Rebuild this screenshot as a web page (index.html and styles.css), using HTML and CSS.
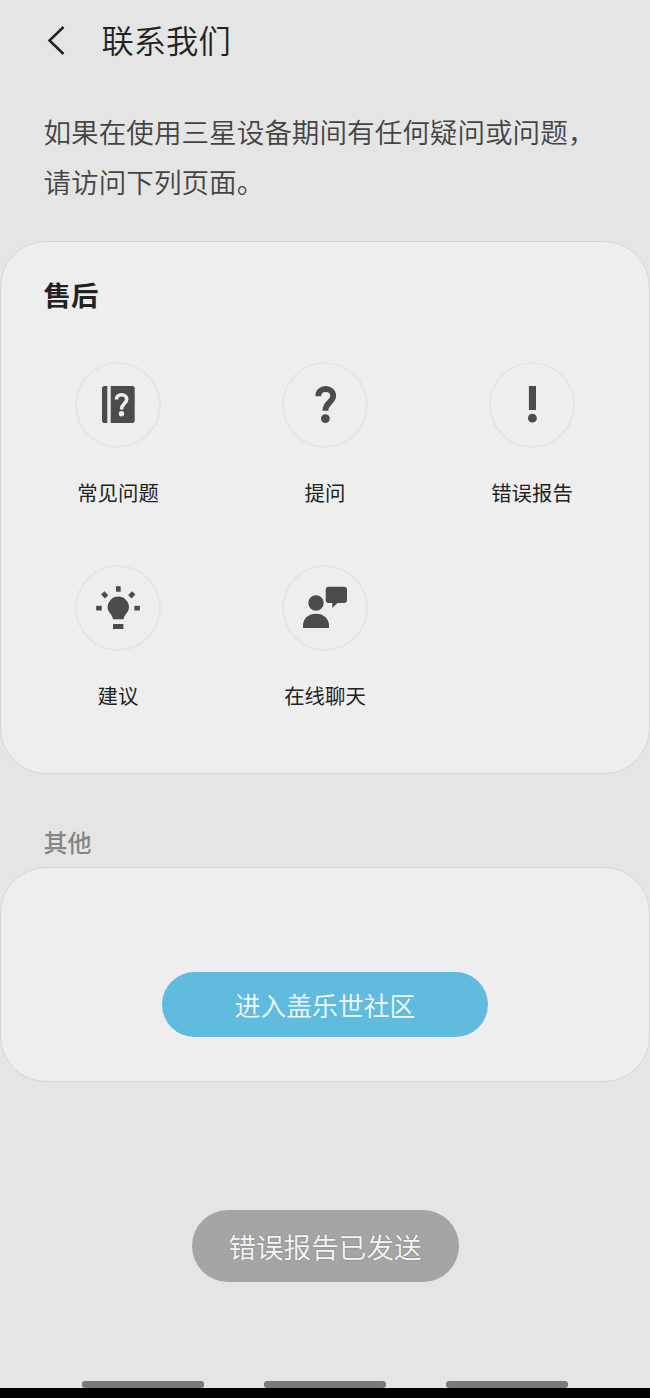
FILE: index.html
```html
<!DOCTYPE html>
<html lang="zh-CN">
<head>
  <meta charset="UTF-8">
  <meta name="viewport" content="width=device-width, initial-scale=1.0">
  <title>联系我们</title>
  <link rel="stylesheet" href="styles.css">
</head>
<body>
  <header class="header">
    <svg class="back" width="20" height="32" viewBox="0 0 20 32">
      <path d="M17.5 2 3.500 15.500l14 13.500" fill="none" stroke="#222" stroke-width="2.5"/>
    </svg>
    <h1>联系我们</h1>
  </header>

  <p class="intro">如果在使用三星设备期间有任何疑问或问题，<br>请访问下列页面。</p>

  <section class="card service">
    <h2>售后</h2>
    <div class="grid">
      <a class="item">
        <svg class="icon" viewBox="0 0 86 86">
          <path d="M32.300 24v37h-2.800a2.500 2.500 0 0 1-2.500-2.500v-32a2.500 2.500 0 0 1 2.500-2.500z"/>
          <path d="M35.700 24h21.500a2.500 2.500 0 0 1 2.500 2.500v32a2.500 2.500 0 0 1-2.500 2.500H35.700z"/>
          <path class="mark light" d="M41.500 37.400C41.500 34.400 43.700 32.700 46.600 32.700c3 0 5.100 1.900 5.100 4.500 0 4.300-5.200 4.500-5.200 10.300"/>
          <circle class="dot-light" cx="46.500" cy="51.800" r="2.700"/>
        </svg>
        <span>常见问题</span>
      </a>
      <a class="item">
        <svg class="icon" viewBox="0 0 86 86">
          <path class="mark" d="M36.300 34.200C36.300 29.800 39.300 27 43.600 27c4.500 0 7.600 2.800 7.600 6.800 0 6.300-7.800 6.500-7.800 14.900"/>
          <circle cx="43.400" cy="56.600" r="4.400"/>
        </svg>
        <span>提问</span>
      </a>
      <a class="item">
        <svg class="icon" viewBox="0 0 86 86">
          <path d="M39.900 24H47v24h-7.100z"/>
          <circle cx="43.400" cy="56.200" r="4.400"/>
        </svg>
        <span>错误报告</span>
      </a>
      <a class="item">
        <svg class="icon" viewBox="0 0 86 86">
          <path d="M43.300 31.600a10.700 10.700 0 0 1 10.700 10.700c0 5.200-4.600 6.700-5.500 12H38.100c-.9-5.300-5.500-6.800-5.500-12a10.700 10.700 0 0 1 10.700-10.700z"/>
          <rect x="38" y="58.900" width="10.400" height="5.200" rx=".6"/>
          <rect x="41" y="21.200" width="4.700" height="5.500"/>
          <rect x="21.200" y="40.800" width="5.500" height="4.700"/>
          <rect x="59.400" y="40.800" width="5.500" height="4.700"/>
          <rect x="27" y="27.500" width="5.500" height="4.700" transform="rotate(45 29.700 29.800)"/>
          <rect x="54" y="27.500" width="5.500" height="4.700" transform="rotate(-45 56.700 29.800)"/>
        </svg>
        <span>建议</span>
      </a>
      <a class="item">
        <svg class="icon" viewBox="0 0 86 86">
          <circle cx="34" cy="38" r="7.700"/>
          <path d="M21 63v-2.500C21 53.500 26.500 48.700 34 48.700s13 4.800 13 11.800V63z"/>
          <path d="M46.700 21.700H62a3 3 0 0 1 3 3V35a3 3 0 0 1-3 3h-6.500l-5.200 5v-5h-3.600a3 3 0 0 1-3-3V24.700a3 3 0 0 1 3-3z"/>
        </svg>
        <span>在线聊天</span>
      </a>
    </div>
  </section>

  <h3 class="subtitle">其他</h3>
  <section class="card other">
    <button class="community">进入盖乐世社区</button>
  </section>

  <div class="toast">错误报告已发送</div>

  <footer class="navbar">
    <i></i><i></i><i></i>
  </footer>
</body>
</html>
```
FILE: styles.css
```css
* {
  box-sizing: border-box;
}
body {
  margin: 0;
  height: 1398px;
  display: flex;
  flex-direction: column;
  background: #e5e5e5;
  color: #222;
  font-family: "Noto Sans CJK SC", sans-serif;
  overflow: hidden;
}
h1, h2, h3, p {
  margin: 0;
}

/* 顶部标题 */
.header {
  display: flex;
  align-items: center;
  height: 81px;
  padding-left: 46px;
}
.header h1 {
  margin-left: 35.5px;
  padding-bottom: 3px;
  font-size: 32.3px;
  font-weight: 350;
  line-height: 48px;
}
.intro {
  height: 160px;
  padding: 25px 0 0 43.5px;
  font-size: 27.6px;
  font-weight: 350;
  line-height: 50px;
  color: #444;
  white-space: nowrap;
}

/* 卡片 */
.card {
  flex: none;
  background: #eee;
  border: 1px solid #d6d6d6;
  border-radius: 46px;
}
.service {
  height: 533px;
  padding: 32px 13.5px 0;
}
.service h2 {
  padding-left: 29px;
  font-size: 27.4px;
  font-weight: 700;
  line-height: 40px;
}
.grid {
  display: grid;
  grid-template-columns: repeat(3, 1fr);
  grid-auto-rows: 203px;
  margin-top: 48px;
}
.item {
  display: flex;
  flex-direction: column;
  align-items: center;
  font-size: 20.4px;
  line-height: 30px;
}
.icon {
  width: 86px;
  height: 86px;
  margin-bottom: 29px;
  border-radius: 50%;
  box-shadow: inset 0 0 0 2px #e5e5e5;
  fill: #4b4b4b;
}
.mark {
  fill: none;
  stroke: #4b4b4b;
  stroke-width: 5.8;
}
.light {
  stroke: #eee;
  stroke-width: 3.6;
}
.dot-light {
  fill: #eee;
}

/* 其他 */
.subtitle {
  height: 93px;
  padding: 50px 0 0 43.5px;
  font-size: 24px;
  font-weight: 500;
  line-height: 36px;
  color: #858585;
}
.other {
  height: 215px;
  padding-top: 104px;
  text-align: center;
}
.community {
  width: 326px;
  height: 65px;
  padding: 0;
  border: none;
  border-radius: 33px;
  background: #61bbde;
  color: #f3fafd;
  font-family: inherit;
  font-size: 25.8px;
  font-weight: 350;
}

/* 提示 */
.toast {
  align-self: center;
  width: 267px;
  height: 72px;
  margin-top: 128px;
  border-radius: 36px;
  background: #a5a5a5;
  color: #f5f5f5;
  font-size: 27.6px;
  font-weight: 350;
  line-height: 73px;
  text-align: center;
  text-shadow: 0 0 2px rgba(0,0,0,0.25);
}

/* 底部导航条 */
.navbar {
  display: flex;
  gap: 60px;
  height: 17px;
  margin-top: auto;
  padding-left: 82px;
  border-bottom: 10px solid #000;
}
.navbar i {
  width: 122px;
  height: 7px;
  border-radius: 3px;
  background: #7a7a7a;
}
```
